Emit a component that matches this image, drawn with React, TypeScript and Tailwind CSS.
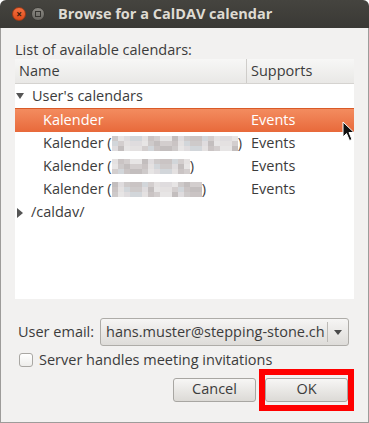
import React from "react";

const font = { fontFamily: '"Open Sans", "DejaVu Sans", sans-serif' };

function Blur({ w, seed }: { w: number; seed: number }) {
  const cols = Math.floor(w / 6);
  const shades = ["#c9c2c2", "#d8d4d6", "#bdb6b6", "#e2dfdf", "#c8ccd2", "#b5aeae", "#dedada", "#c2bdbd"];
  const cells = [];
  for (let r = 0; r < 3; r++) {
    for (let c = 0; c < cols; c++) {
      const s = shades[(c * 3 + r * 5 + seed * 7 + ((c * c) % 5)) % shades.length];
      cells.push(<div key={r + "-" + c} style={{ background: s }} className="w-[6px] h-[5px]" />);
    }
  }
  return (
    <div className="inline-grid opacity-80" style={{ gridTemplateColumns: `repeat(${cols}, 6px)`, width: cols * 6 }}>
      {cells}
    </div>
  );
}

function Row({ blurW, seed }: { blurW: number; seed: number }) {
  return (
    <div className="h-[23px] flex items-center text-[#3c3c3c]">
      <div className="w-[232px] pl-[28px] flex items-center">
        <span>Kalender (</span>
        <Blur w={blurW} seed={seed} />
        <span>)</span>
      </div>
      <div className="pl-[4px]">Events</div>
    </div>
  );
}

export default function App() {
  return (
    <div className="w-[369px] h-[423px] bg-white text-[14.5px] leading-none" style={font}>
      {/* title bar */}
      <div className="h-[28px] rounded-t-[6px] bg-gradient-to-b from-[#45443f] to-[#3a3935] flex items-center">
        <div className="ml-[12px] w-[14px] h-[14px] rounded-full bg-gradient-to-b from-[#f4703f] to-[#df4a18] border border-[#9e3a16] flex items-center justify-center text-[#3a1a0a] text-[10px] font-bold">
          ×
        </div>
        <div className="ml-[5px] w-[14px] h-[14px] rounded-full bg-gradient-to-b from-[#8a8882] to-[#6a6964] border border-[#3a3935] flex items-center justify-center">
          <div className="w-[6px] h-[6px] border border-[#353430]" />
        </div>
        <div className="ml-[13px] text-[#dfdbd2] font-bold text-[14.5px]">Browse for a CalDAV calendar</div>
      </div>
      {/* body */}
      <div className="h-[395px] bg-[#f2f1f0] border-x border-b border-[#9d9c9a] flex flex-col pl-[14px] pr-[14px] text-[#3c3c3c]">
        <div className="mt-[15px] h-[15px] flex items-center">List of available calendars:</div>
        <div className="mt-[1px] w-[339px] h-[240px] bg-white relative">
          <div className="h-[25px] flex items-center bg-gradient-to-b from-[#f7f7f6] to-[#e9e8e6] border-b border-[#d5d3d0] text-[#3c3c3c]">
            <div className="w-[232px] h-full pl-[4px] flex items-center border-r border-[#cfcdca]">Name</div>
            <div className="pl-[4px]">Supports</div>
          </div>
          <div className="h-[24px] flex items-center">
            <svg width="8" height="8" viewBox="0 0 8 8" className="ml-[1px]">
              <path d="M0 1 L8 1 L4 7 Z" fill="#555" />
            </svg>
            <span className="ml-[8px]">User's calendars</span>
          </div>
          <div className="h-[24px] flex items-center text-white bg-gradient-to-b from-[#f38c5f] to-[#e8693a] border-t border-[#d95a28]">
            <div className="w-[232px] pl-[28px]">Kalender</div>
            <div className="pl-[4px]">Events</div>
          </div>
          <Row blurW={127} seed={1} />
          <Row blurW={80} seed={2} />
          <Row blurW={93} seed={3} />
          <div className="h-[23px] flex items-center">
            <svg width="8" height="10" viewBox="0 0 8 10" className="ml-[1px]">
              <path d="M1 0 L7 5 L1 10 Z" fill="#555" />
            </svg>
            <span className="ml-[7px]">/caldav/</span>
          </div>
          {/* mouse cursor */}
          <svg className="absolute left-[327px] top-[62px]" width="14" height="22" viewBox="0 0 14 22">
            <path d="M1 1 L1 16 L4.5 12.5 L7.5 19.5 L10 18.5 L7 11.5 L12 11.5 Z" fill="#111" stroke="#fff" strokeWidth="1" />
          </svg>
        </div>
        {/* email row */}
        <div className="mt-[19px] flex items-center">
          <div className="w-[85px] pl-[3px]">User email:</div>
          <div className="w-[249px] h-[28px] rounded-[3px] border border-[#aeaca8] bg-gradient-to-b from-[#f6f5f4] to-[#dedcd9] flex items-center">
            <div className="flex-1 pl-[5px] whitespace-nowrap">hans.muster@stepping-stone.ch</div>
            <div className="w-px h-[20px] bg-[#bcbab6]" />
            <svg width="20" height="8" viewBox="0 0 20 8">
              <path d="M6 2 L14 2 L10 7 Z" fill="#4a4a4a" />
            </svg>
          </div>
        </div>
        {/* checkbox */}
        <div className="mt-[7px] flex items-center">
          <div className="ml-[4px] w-[14px] h-[14px] rounded-[3px] border border-[#a9a7a3] bg-gradient-to-b from-[#ffffff] to-[#eeedeb]" />
          <span className="ml-[6px]">Server handles meeting invitations</span>
        </div>
        {/* buttons */}
        <div className="mt-[1px] flex justify-end items-center">
          <div className="w-[83px] h-[24px] rounded-[3px] border border-[#a8a6a2] bg-gradient-to-b from-[#f7f6f5] to-[#dcdad6] flex items-center justify-center">
            Cancel
          </div>
          <div className="ml-[3px] w-[95px] h-[42px] border-[6px] border-[#ff0000] flex items-center justify-center">
            <div className="w-[83px] h-[24px] rounded-[3px] border border-[#a8a6a2] bg-gradient-to-b from-[#f7f6f5] to-[#dcdad6] flex items-center justify-center">
              OK
            </div>
          </div>
        </div>
      </div>
    </div>
  );
}
